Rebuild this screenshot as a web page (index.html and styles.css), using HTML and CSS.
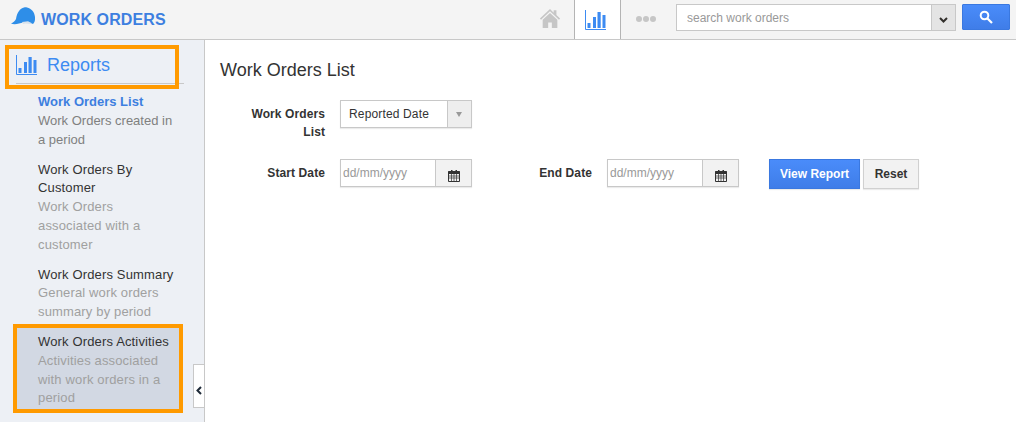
FILE: index.html
```html
<!DOCTYPE html>
<html lang="en">
<head>
  <meta charset="UTF-8">
  <title>Work Orders</title>
  <link rel="stylesheet" href="styles.css">
</head>
<body>
  <header class="topbar">
    <div class="brand">
      <svg class="brand-icon" width="24" height="18" viewBox="0 0 24 18">
        <path d="M0 16.500C2 15.500 4 14.500 5 12C6 5.500 9 1.500 13 .5 14 0 15 0 16 .5 20.500 1.500 23.500 5 24 10 24.200 13 23.800 15.500 22 17 18 15 12 15 8 16.500 5 17.500 2 17.500 0 16.500z" fill="#2e8ee8"/>
        <path d="M11 15l6-.8 3.500 1.800-2 1-4-.6-2.500.6z" fill="#d8e2ec"/>
      </svg>
      <span class="brand-name">WORK ORDERS</span>
    </div>
    <nav class="topnav">
      <a class="topnav-item home">
        <svg width="22" height="20" viewBox="0 0 24 22" preserveAspectRatio="none">
          <path d="M12 1L1 11.500l1.200 1.300L12 3.500l9.800 9.300 1.200-1.300-4-3.800V2.500h-3v2.800z" fill="#c6c6c6"/>
          <path d="M12 5.500l-8 7.500v9h6v-6h4v6h6v-9z" fill="#c6c6c6"/>
        </svg>
      </a>
      <a class="topnav-item active">
        <svg width="21" height="20" viewBox="0 0 21 20">
          <path d="M.5 0v19.500H21" fill="none" stroke="#3d8bf2" stroke-width="1"/>
          <path d="M2.500 13h3v5h-3zM8 7h3v11H8zM12.500 2h3.200v16h-3.200zM17.500 5h3v13h-3z" fill="#3d8bf2"/>
        </svg>
      </a>
      <a class="topnav-item more">
        <span class="dot"></span><span class="dot"></span><span class="dot"></span>
      </a>
    </nav>
    <div class="search">
      <input class="search-input" type="text" placeholder="search work orders">
      <span class="search-drop">
        <svg width="9" height="6" viewBox="0 0 9 6"><path d="M1 1l3.500 3.500L8 1" fill="none" stroke="#33302c" stroke-width="2"/></svg>
      </span>
    </div>
    <button class="search-btn">
      <svg width="14" height="14" viewBox="0 0 14 14">
        <circle cx="5.500" cy="5.500" r="3.800" fill="none" stroke="#fff" stroke-width="2"/>
        <path d="M8.500 8.500L13 13" stroke="#fff" stroke-width="2.200"/>
      </svg>
    </button>
  </header>

  <div class="main">
    <aside class="sidebar">
      <div class="side-title">
        <svg width="21" height="20" viewBox="0 0 21 20">
          <path d="M.5 0v19.500H21" fill="none" stroke="#3d8bf2" stroke-width="1"/>
          <path d="M2.500 13h3v5h-3zM8 7h3v11H8zM12.500 2h3.200v16h-3.200zM17.500 5h3v13h-3z" fill="#3d8bf2"/>
        </svg>
        <span>Reports</span>
      </div>
      <ul class="side-list">
        <li class="side-item current">
          <strong>Work Orders List</strong>
          <p>Work Orders created in a period</p>
        </li>
        <li class="side-item">
          <strong>Work Orders By Customer</strong>
          <p>Work Orders associated with a customer</p>
        </li>
        <li class="side-item">
          <strong>Work Orders Summary</strong>
          <p>General work orders summary by period</p>
        </li>
        <li class="side-item selected">
          <strong>Work Orders Activities</strong>
          <p>Activities associated with work orders in a period</p>
        </li>
      </ul>
      <div class="collapse">
        <svg width="6" height="9" viewBox="0 0 6 9"><path d="M5 1L1.500 4.500 5 8" fill="none" stroke="#1e2a38" stroke-width="2"/></svg>
      </div>
    </aside>

    <section class="content">
      <h1>Work Orders List</h1>
      <div class="form-row first">
        <label class="form-label">Work Orders List</label>
        <div class="select">
          <span class="select-value">Reported Date</span>
          <span class="select-arrow"></span>
        </div>
      </div>
      <div class="form-row">
        <label class="form-label">Start Date</label>
        <div class="date">
          <input class="date-input" type="text" placeholder="dd/mm/yyyy">
          <span class="date-btn">
            <svg width="12" height="12" viewBox="0 0 12 12"><use href="#cal"/></svg>
          </span>
        </div>
        <label class="form-label end">End Date</label>
        <div class="date">
          <input class="date-input" type="text" placeholder="dd/mm/yyyy">
          <span class="date-btn">
            <svg width="12" height="12" viewBox="0 0 12 12"><use href="#cal"/></svg>
          </span>
        </div>
        <button class="btn primary">View Report</button>
        <button class="btn">Reset</button>
      </div>
    </section>
  </div>

  <div class="mark mark-reports"></div>
  <div class="mark mark-activities"></div>

  <svg class="defs" width="0" height="0">
    <symbol id="cal" viewBox="0 0 12 12">
      <path d="M3 0h1.500v2H3zM7.500 0H9v2H7.500z" fill="#333"/>
      <path d="M.5 1.500h11v10H.5z" fill="none" stroke="#333"/>
      <path d="M0 1.500h12v2.500H0z" fill="#333"/>
      <path d="M3.500 4v7.500M6 4v7.500M8.500 4v7.500M.5 6h11M.5 8h11" stroke="#333" stroke-width=".7"/>
    </symbol>
  </svg>
</body>
</html>
```

FILE: styles.css
```css
* {
  box-sizing: border-box;
}

html, body {
  height: 100%;
}

body {
  margin: 0;
  position: relative;
  overflow: hidden;
  background-color: #fff;
  font-family: "Liberation Sans", Arial, sans-serif;
  font-size: 13px;
  color: #333;
}

.defs {
  position: absolute;
}

.topbar {
  display: flex;
  align-items: stretch;
  height: 40px;
  background-color: #f4f4f4;
  border-bottom: 1px solid #c8c8c8;
}

.brand {
  display: flex;
  align-items: center;
  gap: 6px;
  width: 525px;
  padding-left: 11px;
}

.brand-icon {
  margin-top: -7px;
}

.brand-name {
  font-size: 16px;
  font-weight: bold;
  letter-spacing: .1px;
  color: #3d7fe0;
}

.topnav {
  display: flex;
}

.topnav-item {
  display: flex;
  align-items: center;
  justify-content: center;
}

.home {
  width: 49px;
  padding-bottom: 3px;
}

.active {
  width: 47px;
  padding-right: 5px;
  background-color: #fff;
  border-left: 1px solid #b4b4b4;
  border-right: 1px solid #b4b4b4;
}

.more {
  width: 55px;
  gap: 1px;
  padding: 0 5px 2px 0;
}

.dot {
  width: 6px;
  height: 6px;
  border-radius: 50%;
  background-color: #c6c6c6;
}

.search {
  display: flex;
  width: 280px;
  height: 27px;
  margin-top: 4px;
  border: 1px solid #c8c8c8;
}

.search-input {
  flex: 1;
  min-width: 0;
  border: none;
  outline: none;
  padding: 0 10px;
  font-family: inherit;
  font-size: 12px;
  background-color: #fff;
}

.search-input::placeholder,
.date-input::placeholder {
  color: #999;
  opacity: 1;
}

.search-drop {
  display: flex;
  align-items: center;
  justify-content: center;
  width: 24px;
  padding-top: 4px;
  background-color: #e4e4e4;
  border-left: 1px solid #c8c8c8;
}

.search-btn {
  display: flex;
  align-items: center;
  justify-content: center;
  width: 48px;
  height: 26px;
  margin: 4px 0 0 6px;
  padding: 0;
  border: 1px solid #3a78e0;
  border-radius: 1px;
  background: linear-gradient(#4a8cfa, #3f7de8);
}

.main {
  display: flex;
  height: 382px;
}

.sidebar {
  position: relative;
  flex: none;
  width: 205px;
  padding: 4px 0 0 16px;
  background-color: #edf0f5;
  border-right: 1px solid #c8c8c8;
}

.side-title {
  display: flex;
  align-items: center;
  gap: 10px;
  width: 168px;
  height: 40px;
  padding-top: 3px;
  border-bottom: 1px solid #c8c8c8;
  font-size: 18px;
  color: #3d8bf2;
}

.side-list {
  list-style: none;
  margin: 0 0 0 -3px;
  padding: 4px 0 0;
  width: 166px;
}

.side-item {
  padding: 5px 3px 6.25px 25px;
  width: 166px;
  letter-spacing: .15px;
  line-height: 18.75px;
}

.side-item strong {
  display: block;
  font-weight: normal;
  color: #333;
}

.side-item p {
  margin: 0;
  color: #a0a0a0;
}

.current strong {
  font-weight: bold;
  color: #3d7fe0;
  letter-spacing: 0;
}

.current p {
  letter-spacing: 0;
  color: #808080;
}

.selected {
  padding-bottom: 5px;
  background-color: #d2d8e3;
}

.collapse {
  position: absolute;
  right: 0;
  top: 324px;
  display: flex;
  align-items: center;
  justify-content: center;
  width: 11px;
  height: 44px;
  padding-top: 9px;
  background-color: #fff;
  border: 1px solid #c8c8c8;
  border-right: none;
}

.content {
  flex: 1;
  padding: 19px 15px;
}

h1 {
  margin: 0 0 19px;
  font-size: 18px;
  font-weight: normal;
  line-height: 22px;
  color: #333;
}

.form-row {
  display: flex;
  align-items: flex-start;
}

.form-row.first {
  height: 59px;
}

.form-label {
  flex: none;
  width: 105px;
  padding: 5px 0 0 30px;
  font-size: 12px;
  font-weight: bold;
  letter-spacing: .1px;
  line-height: 18px;
  text-align: right;
  color: #333;
}

.form-label.end {
  width: 72px;
  margin-left: 48px;
  padding-left: 0;
}

.select {
  display: flex;
  width: 132px;
  height: 28px;
  margin-left: 15px;
  background-color: #fff;
  border: 1px solid #c8c8c8;
  box-shadow: 0 1px 1px rgba(0, 0, 0, .08);
}

.select-value {
  flex: 1;
  padding-left: 8px;
  line-height: 26px;
  font-size: 12px;
  letter-spacing: .15px;
}

.select-arrow {
  width: 24px;
  background-color: #eee;
  border-left: 1px solid #c8c8c8;
  position: relative;
}

.select-arrow::after {
  content: "";
  position: absolute;
  left: 8px;
  top: 11px;
  border-left: 3.5px solid transparent;
  border-right: 3.5px solid transparent;
  border-top: 5px solid #999;
}

.date {
  display: flex;
  width: 132px;
  height: 28px;
  margin-left: 15px;
  border: 1px solid #c8c8c8;
  box-shadow: 0 1px 1px rgba(0, 0, 0, .08);
}

.date-input {
  flex: 1;
  min-width: 0;
  border: none;
  outline: none;
  padding: 0 2px;
  font-family: inherit;
  font-size: 12px;
}

.date-btn {
  display: flex;
  align-items: center;
  justify-content: center;
  width: 36px;
  padding-top: 5px;
  background-color: #f2f2f2;
  border-left: 1px solid #c8c8c8;
}

.btn {
  height: 30px;
  padding: 0;
  width: 56px;
  margin-left: 3px;
  border: 1px solid #d0d0d0;
  background-color: #f2f2f2;
  font-family: inherit;
  font-size: 12px;
  font-weight: bold;
  color: #333;
  box-shadow: 0 1px 1px rgba(0, 0, 0, .08);
}

.btn.primary {
  width: 91px;
  margin-left: 30px;
  border-color: #3a78e0;
  background: linear-gradient(#4a8cfa, #3f7de8);
  color: #fff;
}

.mark {
  position: absolute;
  border: 4px solid #ff9a00;
}

.mark-reports {
  left: 5px;
  top: 45px;
  width: 174px;
  height: 44px;
}

.mark-activities {
  left: 13px;
  top: 324px;
  width: 170px;
  height: 89px;
}
```
